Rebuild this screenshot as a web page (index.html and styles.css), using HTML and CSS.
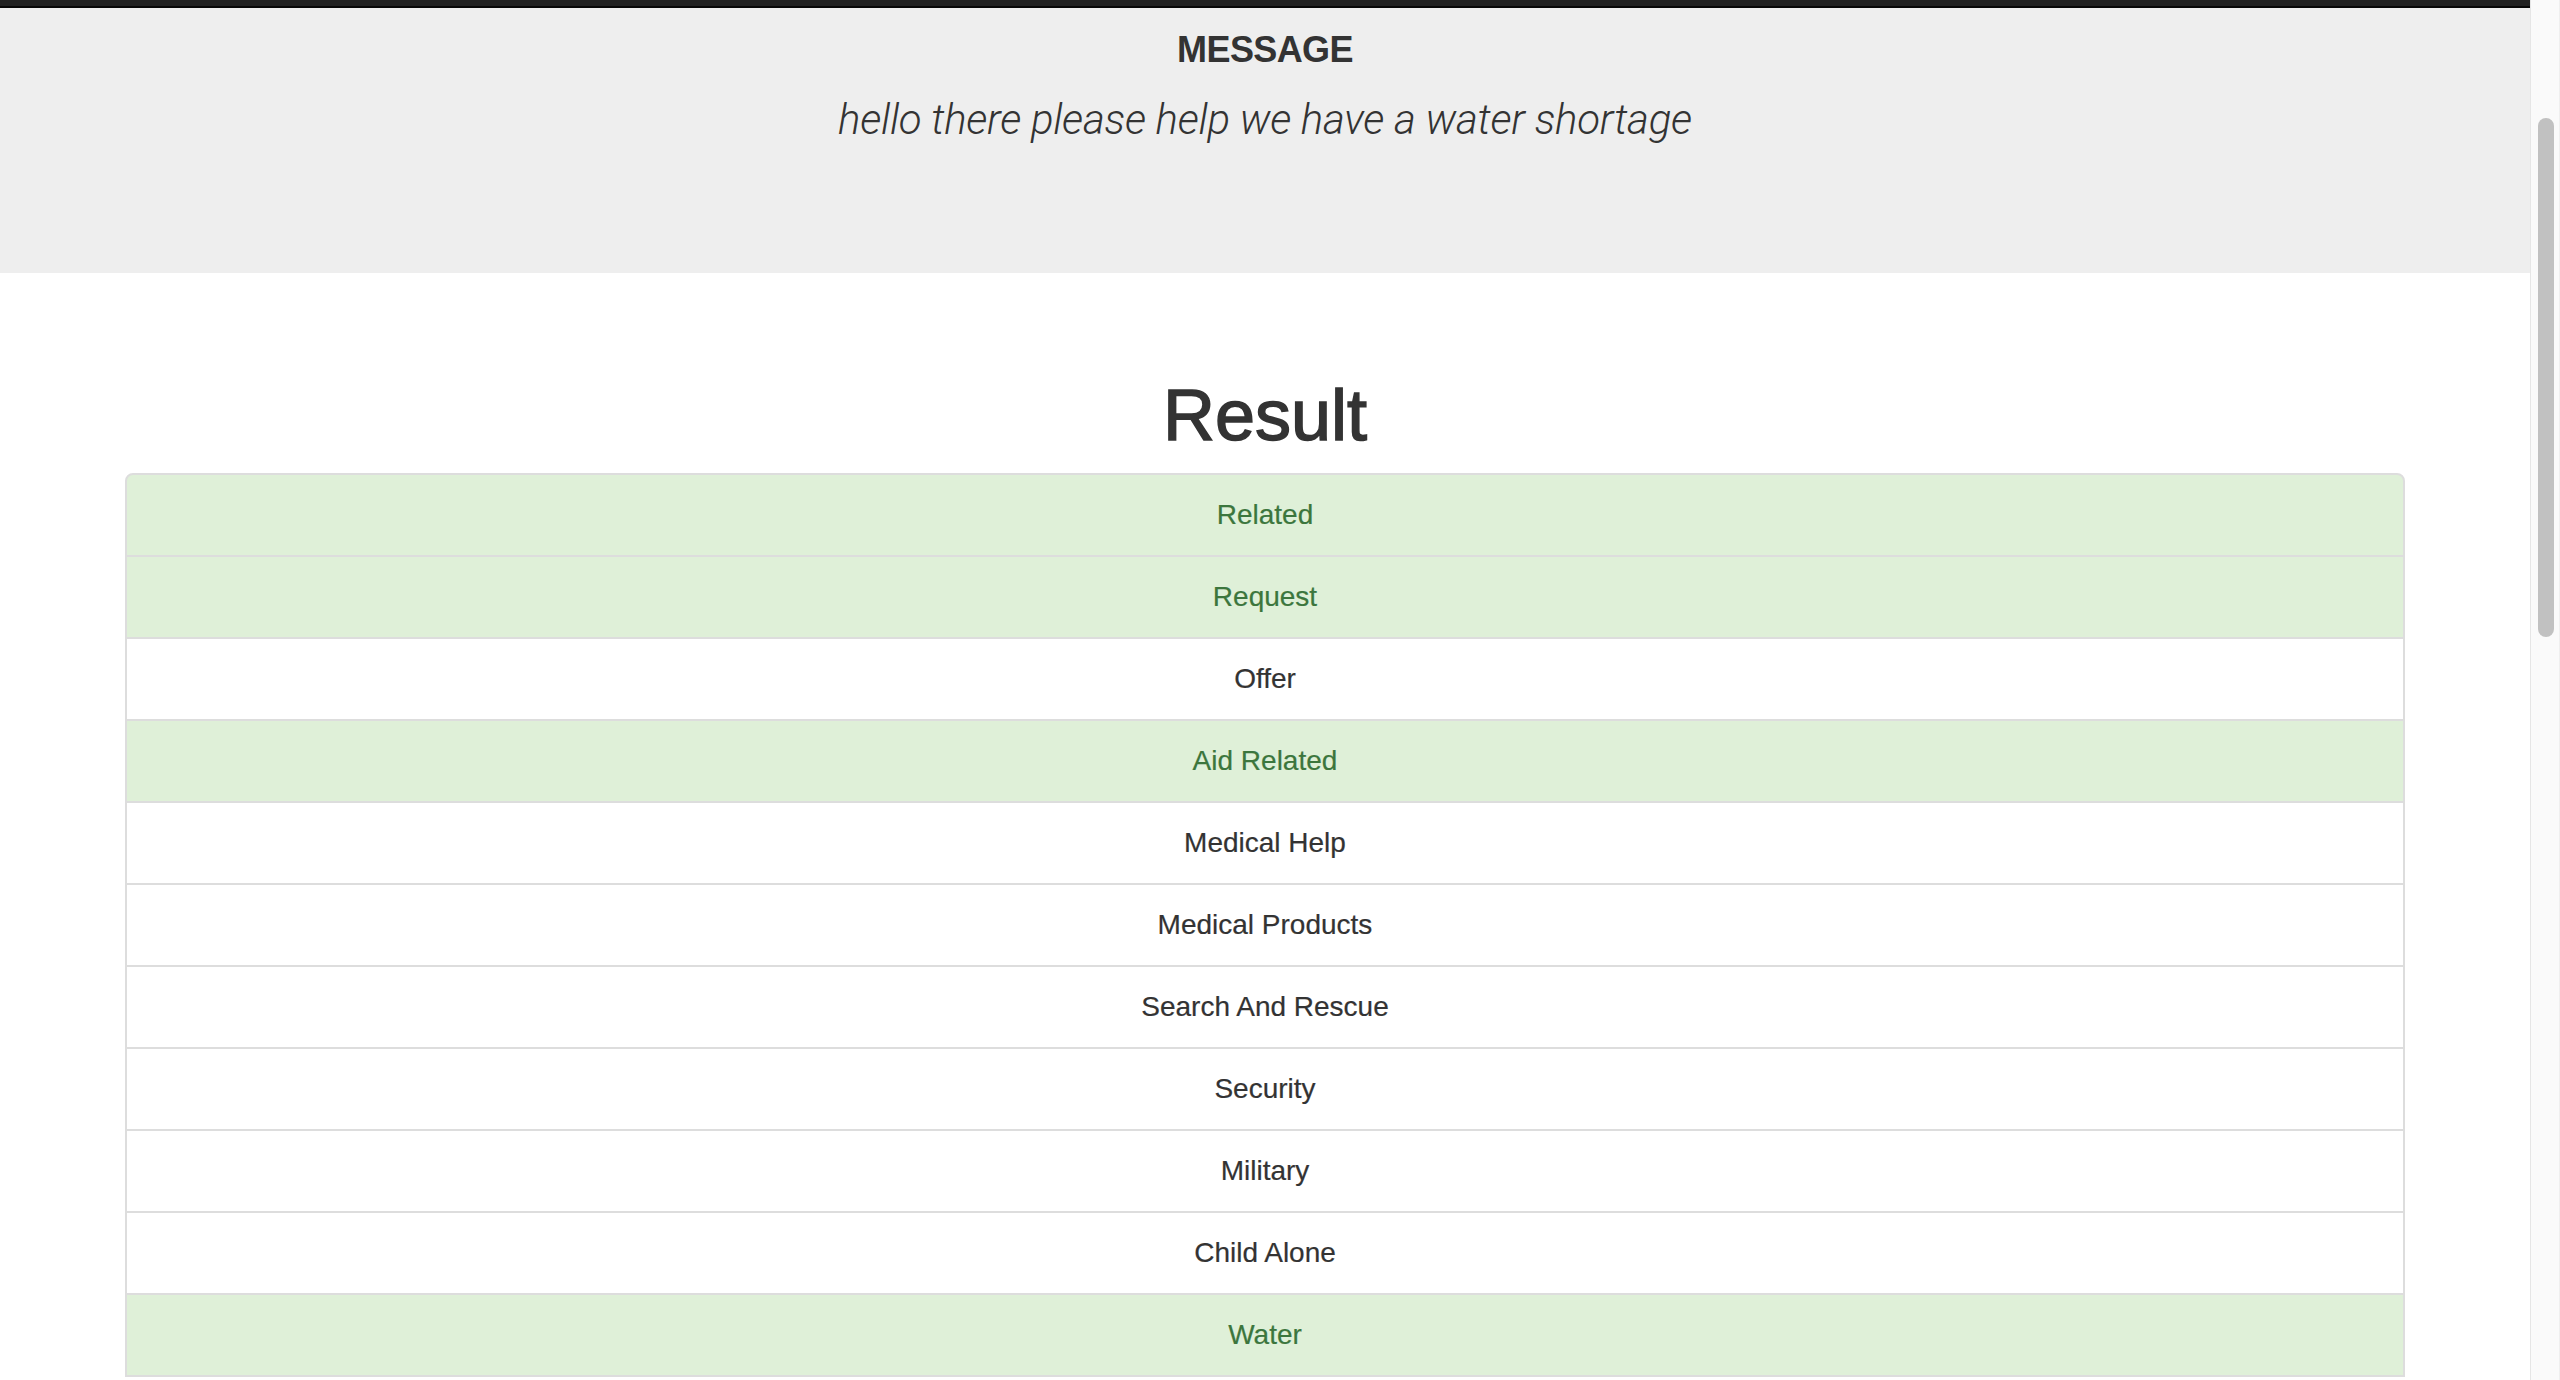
FILE: index.html
```html
<!DOCTYPE html>
<html lang="en">
<head>
<meta charset="utf-8">
<title>Disaster Response</title>
<link rel="stylesheet" href="styles.css">
</head>
<body>
<div class="window">
  <div class="main">
    <div class="navbar-edge"></div>
    <div class="jumbotron">
      <h3 class="msg-label">MESSAGE</h3>
      <p class="msg-text">hello there please help we have a water shortage</p>
    </div>
    <div class="container">
      <h1 class="result-title">Result</h1>
      <ul class="list-group">
        <li class="item success">Related</li>
        <li class="item success">Request</li>
        <li class="item">Offer</li>
        <li class="item success">Aid Related</li>
        <li class="item">Medical Help</li>
        <li class="item">Medical Products</li>
        <li class="item">Search And Rescue</li>
        <li class="item">Security</li>
        <li class="item">Military</li>
        <li class="item">Child Alone</li>
        <li class="item success">Water</li>
      </ul>
    </div>
  </div>
  <div class="scrollbar"><div class="thumb"></div></div>
</div>
</body>
</html>
```

FILE: styles.css
```css
html, body {
  margin: 0;
  padding: 0;
  height: 100%;
  overflow: hidden;
}
body {
  font-family: "Liberation Sans", Arial, Helvetica, sans-serif;
  color: #333;
  background: #fff;
}
.window {
  display: flex;
  height: 1380px;
}
.main {
  flex: 1;
  min-width: 0;
  overflow: hidden;
}
.navbar-edge {
  height: 6px;
  background: #222;
  border-bottom: 2px solid #080808;
}
.jumbotron {
  background: #eee;
  padding: 22px 0 124px;
  text-align: center;
}
.msg-label {
  margin: 0;
  font-size: 36px;
  line-height: 1.1;
  font-weight: 700;
  letter-spacing: -0.6px;
  color: #333;
}
.msg-text {
  margin: 21px 0 0;
  font-family: "Roboto", "Lato", "Liberation Sans", sans-serif;
  font-size: 42px;
  line-height: 1.4;
  font-weight: 300;
  font-style: italic;
  letter-spacing: -0.25px;
  color: #333;
}
.container {
  width: 2280px;
  margin: 0 auto;
}
.result-title {
  margin: 103px 0 17px;
  font-size: 72px;
  line-height: 1.1;
  font-weight: 400;
  -webkit-text-stroke: 1.5px #333;
  text-align: center;
  color: #333;
}
.list-group {
  margin: 0;
  padding: 0;
  list-style: none;
}
.item {
  padding: 20px 30px;
  font-size: 28px;
  line-height: 40px;
  text-align: center;
  background: #fff;
  border: 2px solid #ddd;
  margin-bottom: -2px;
  color: #333;
  -webkit-text-stroke: 0.2px currentColor;
}
.item:first-child {
  border-radius: 8px 8px 0 0;
}
.item.success {
  background: #dff0d8;
  color: #3c763d;
}
.scrollbar {
  width: 30px;
  flex: none;
  box-sizing: border-box;
  background: #fafafa;
  border-left: 1px solid #e6e6e6;
  border-right: 1px solid #efefef;
  padding: 118px 0 0 7px;
}
.thumb {
  width: 16px;
  height: 519px;
  border-radius: 8px;
  background: #c1c1c1;
}
```
